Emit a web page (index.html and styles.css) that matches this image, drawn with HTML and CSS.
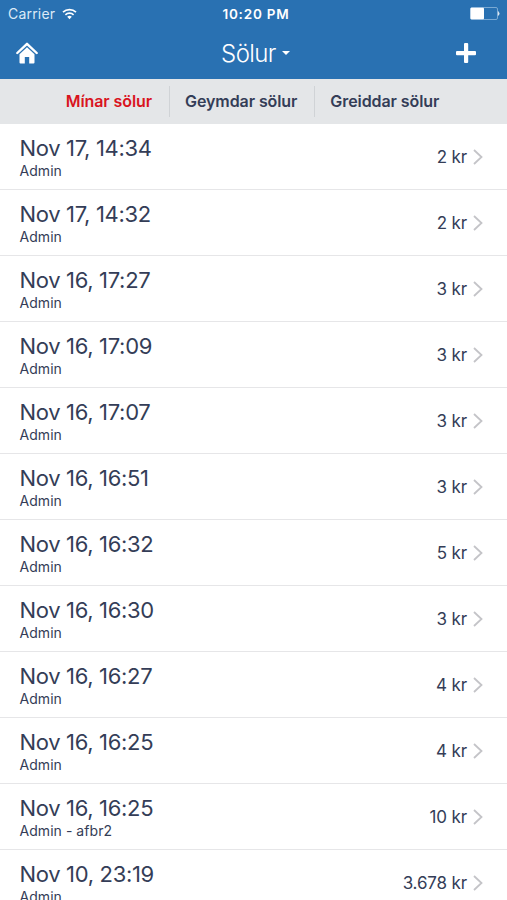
FILE: index.html
```
<!DOCTYPE html>
<html lang="is">

<head>
    <meta charset="utf-8">
    <title>Sölur</title>
    <link rel="stylesheet" href="styles.css">
</head>

<body>
    <header class="header">
        <div class="status">
            <div class="carrier">
                <span>Carrier</span>
                <svg class="wifi" width="15" height="12" viewBox="0 0 15 12">
                    <path d="M1 4.2a9.4 9.4 0 0 1 13 0M3.4 6.8a6 6 0 0 1 8.2 0" fill="none" stroke="#fff" stroke-width="1.7" />
                    <path d="M5.2 8.7a3.4 3.4 0 0 1 4.6 0L7.5 11.2z" fill="#fff" />
                </svg>
            </div>
            <div class="time">10:20 PM</div>
            <svg class="battery" width="30" height="13" viewBox="0 0 30 13">
                <rect x=".5" y=".5" width="27" height="12" rx="1.5" fill="none" stroke="#8fb8dc" stroke-width=".8" />
                <rect x=".5" y=".8" width="13.5" height="11.4" rx="1" fill="#fff" />
                <path d="M28.3 4.5q1.7 2 0 4z" fill="#fff" stroke="#fff" stroke-width=".5" />
            </svg>
        </div>
        <nav class="navbar">
            <svg class="home" width="22" height="22" viewBox="0 0 22 22">
                <path d="M1.3 11L11 1.8l9.7 9.2" fill="none" stroke="#fff" stroke-width="2.4" stroke-linecap="round" stroke-linejoin="round" />
                <path d="M11 5.2l7.5 7.1v8.2q0 1-1 1h-4.3v-6.5H8.8v6.5H4.5q-1 0-1-1v-8.2z" fill="#fff" />
            </svg>
            <h1 class="title">Sölur<span class="caret"></span></h1>
            <svg class="plus" width="22" height="22" viewBox="0 0 22 22">
                <rect x="9" y="1" width="4.2" height="20" rx="1" fill="#fff" />
                <rect x="1" y="9" width="20" height="4.2" rx="1" fill="#fff" />
            </svg>
        </nav>
    </header>
    <div class="tabs">
        <div class="tab active">Mínar sölur</div>
        <div class="tab">Geymdar sölur</div>
        <div class="tab">Greiddar sölur</div>
    </div>
    <ul class="list" id="salesList"></ul>
    <script src="script.js"></script>
</body>

</html>
```
FILE: styles.css
```
* {
    box-sizing: border-box;
}

body {
    height: 900px;
    margin: 0;
    overflow: hidden;
    background: #fff;
    color: #343d57;
    font-family: Inter, "Liberation Sans", sans-serif;
}

.header {
    height: 79px;
    background: #2971b2;
    color: #fff;
}

.status {
    display: grid;
    grid-template-columns: 1fr auto 1fr;
    align-items: center;
    height: 27px;
    padding: 0 7px 0 8px;
    font-size: 13px;
}

.carrier {
    display: flex;
    align-items: center;
    gap: 7px;
    color: #dceaf7;
    font-size: 14px;
    letter-spacing: .2px;
}

.time {
    padding-left: 4px;
    font-size: 13.5px;
    font-weight: 600;
    letter-spacing: .8px;
}

.battery {
    justify-self: end;
}

.navbar {
    display: grid;
    grid-template-columns: 1fr auto 1fr;
    align-items: center;
    height: 52px;
    padding: 0 30px 0 16px;
}

.title {
    display: flex;
    align-items: center;
    gap: 6px;
    margin: 0;
    padding-left: 18px;
    font-size: 24px;
    font-weight: 300;
    letter-spacing: -.6px;
}

.caret {
    border: 4px solid transparent;
    border-top-color: #fff;
    border-bottom: 0;
}

.plus {
    justify-self: end;
}

.tabs {
    display: flex;
    justify-content: center;
    align-items: center;
    height: 45px;
    padding-right: 2px;
    background: #e4e6e8;
    font-size: 16px;
    font-weight: 600;
    letter-spacing: -.08px;
}

.tab {
    height: 31px;
    padding: 0 15px;
    line-height: 31px;
    white-space: nowrap;
}

.tab:first-child,
.tab:nth-child(2) {
    padding-right: 17px;
}

.tab + .tab {
    border-left: 1px solid #d0d3d6;
}

.active {
    color: #d9141e;
}

.list {
    margin: 0;
    padding: 0;
    list-style: none;
}

.row {
    display: flex;
    justify-content: space-between;
    align-items: center;
    height: 66px;
    padding: 2px 24px 0 19.5px;
    border-bottom: 1px solid #e6e6e8;
}

.date {
    font-size: 22px;
    line-height: 26px;
    letter-spacing: -.33px;
}

.user {
    font-size: 14px;
    line-height: 19px;
    letter-spacing: .05px;
}

.amount {
    display: flex;
    align-items: center;
    gap: 6px;
    padding-bottom: 2px;
    font-size: 17px;
    letter-spacing: -.15px;
}
```
FILE: script.js
```
var sales = [
    ['Nov 17, 14:34', 'Admin', '2 kr'],
    ['Nov 17, 14:32', 'Admin', '2 kr'],
    ['Nov 16, 17:27', 'Admin', '3 kr'],
    ['Nov 16, 17:09', 'Admin', '3 kr'],
    ['Nov 16, 17:07', 'Admin', '3 kr'],
    ['Nov 16, 16:51', 'Admin', '3 kr'],
    ['Nov 16, 16:32', 'Admin', '5 kr'],
    ['Nov 16, 16:30', 'Admin', '3 kr'],
    ['Nov 16, 16:27', 'Admin', '4 kr'],
    ['Nov 16, 16:25', 'Admin', '4 kr'],
    ['Nov 16, 16:25', 'Admin - afbr2', '10 kr'],
    ['Nov 10, 23:19', 'Admin', '3.678 kr']
];

var chevron = '<svg width="10" height="16" viewBox="0 0 10 16"><path d="M1 1l7.5 7L1 15" fill="none" stroke="#c4c4c8" stroke-width="1.8"/></svg>';

// Build one row for each sale
document.getElementById('salesList').innerHTML = sales.map(function (sale) {
    return '<li class="row"><div><div class="date">' + sale[0] + '</div>' +
        '<div class="user">' + sale[1] + '</div></div>' +
        '<div class="amount"><span>' + sale[2] + '</span>' + chevron + '</div></li>';
}).join('');
```
